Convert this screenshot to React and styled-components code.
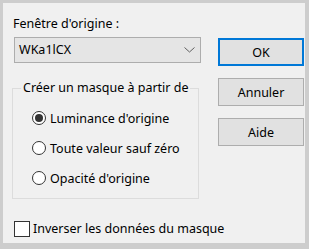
import React from "react";
import styled, { createGlobalStyle } from "styled-components";

const Global = createGlobalStyle`
  html, body { margin: 0; padding: 0; background: #f0f0f0; }
  body { font-family: "Noto Sans", "Segoe UI", sans-serif; font-size: 12.5px; color: #000; }
`;

const Frame = styled.div`
  box-sizing: border-box;
  width: 309px;
  height: 249px;
  border-style: solid;
  border-color: #cdcdcd;
  border-width: 3px 4px 6px 3px;
  background: #f0f0f0;
  display: flex;
`;

const LeftCol = styled.div`
  width: 187px;
  margin-left: 9px;
  display: flex;
  flex-direction: column;
`;

const Label = styled.div`
  margin-top: 12px;
  margin-left: 1px;
  line-height: 18px;
  height: 18px;
  white-space: nowrap;
`;

const Select = styled.div`
  box-sizing: border-box;
  margin-top: 4px;
  margin-left: 2px;
  width: 187px;
  height: 26px;
  background: #e5e5e5;
  border: 1px solid #adadad;
  display: flex;
  align-items: center;
  justify-content: space-between;
  padding: 0 4px 0 4px;
`;

const SelectText = styled.span`
  line-height: 16px;
`;

const Group = styled.fieldset`
  box-sizing: border-box;
  margin: 17px 0 0 0;
  width: 187px;
  height: 119px;
  border: 1px solid #dcdcdc;
  padding: 0 0 0 19px;
  display: flex;
  flex-direction: column;
`;

const Legend = styled.legend`
  padding: 0 2px;
  margin-left: -11px;
  line-height: 16px;
  white-space: nowrap;
`;

const RadioRow = styled.label`
  display: flex;
  align-items: center;
  gap: 4px;
  height: 16px;
  white-space: nowrap;
  margin-top: ${(p) => p.$mt}px;
`;

const RadioCircle = styled.span`
  box-sizing: border-box;
  width: 14px;
  height: 14px;
  border-radius: 50%;
  border: 1px solid #333;
  background: #fff;
  display: flex;
  align-items: center;
  justify-content: center;
  flex: none;
  &::after {
    content: "";
    display: ${(p) => (p.$checked ? "block" : "none")};
    width: 8px;
    height: 8px;
    border-radius: 50%;
    background: #333;
  }
`;

const CheckRow = styled.label`
  display: flex;
  align-items: center;
  gap: 3px;
  margin-top: 21px;
  margin-left: 2px;
  height: 17px;
  white-space: nowrap;
`;

const CheckBox = styled.span`
  box-sizing: border-box;
  width: 16px;
  height: 16px;
  border: 1px solid #333;
  background: #fff;
  flex: none;
`;

const RightCol = styled.div`
  margin-left: 19px;
  padding-top: 35px;
  display: flex;
  flex-direction: column;
  gap: 12px;
`;

const Button = styled.button`
  box-sizing: border-box;
  width: 86px;
  height: 28px;
  margin: 0;
  padding: 0;
  font: inherit;
  color: #000;
  background: #e1e1e1;
  border: ${(p) => (p.$primary ? "2px solid #0078d7" : "1px solid #adadad")};
  display: flex;
  align-items: center;
  justify-content: center;
`;

const Chevron = () => (
  <svg width="11" height="6" viewBox="0 0 11 6" style={{ marginRight: 1 }}>
    <path d="M0.5 0.5 L5.5 5 L10.5 0.5" fill="none" stroke="#606060" strokeWidth="1" />
  </svg>
);

export default function App() {
  return (
    <>
      <Global />
      <Frame>
        <LeftCol>
          <Label>Fenêtre d'origine :</Label>
          <Select>
            <SelectText>WKa1lCX</SelectText>
            <Chevron />
          </Select>
          <Group>
            <Legend>Créer un masque à partir de</Legend>
            <RadioRow $mt={14}>
              <RadioCircle $checked />
              Luminance d'origine
            </RadioRow>
            <RadioRow $mt={14}>
              <RadioCircle />
              Toute valeur sauf zéro
            </RadioRow>
            <RadioRow $mt={14}>
              <RadioCircle />
              Opacité d'origine
            </RadioRow>
          </Group>
          <CheckRow>
            <CheckBox />
            Inverser les données du masque
          </CheckRow>
        </LeftCol>
        <RightCol>
          <Button $primary>OK</Button>
          <Button>Annuler</Button>
          <Button>Aide</Button>
        </RightCol>
      </Frame>
    </>
  );
}
